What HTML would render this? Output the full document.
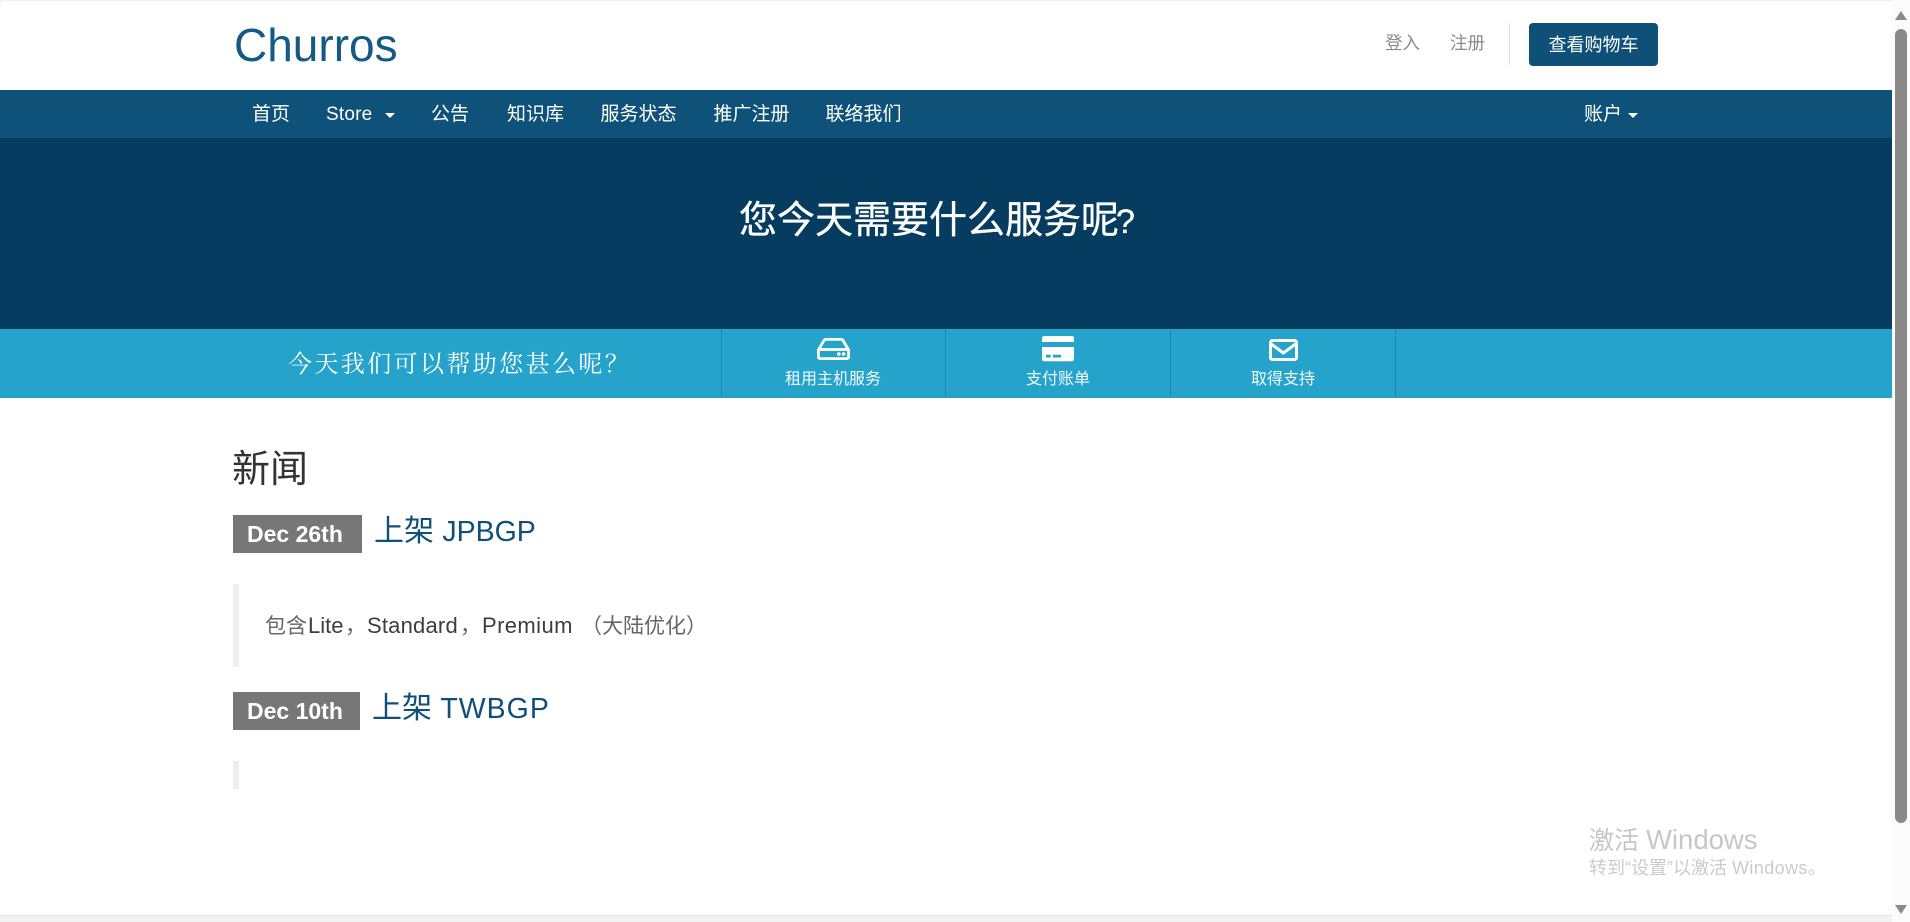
<!DOCTYPE html>
<html lang="zh-CN">
<head>
<meta charset="utf-8">
<title>Churros</title>
<style>
html,body{margin:0;padding:0;width:1910px;height:922px;overflow:hidden;background:#f3f3f3;}
body{position:relative;font-family:"Liberation Sans","Noto Sans CJK SC",sans-serif;}
#page{position:absolute;left:0;top:0;width:1892px;height:915px;background:#fff;border-radius:7px 0 0 0;overflow:hidden;}
#bar{position:absolute;left:1892px;top:0;width:18px;height:922px;background:#fbfbfb;}
.a{position:absolute;white-space:nowrap;}
.t{position:absolute;white-space:nowrap;line-height:1;}
.n{color:#fff;font-size:19px;top:105px;}
.bl{position:absolute;left:233px;width:6px;background:#eee;}
.badge{position:absolute;left:233px;background:#777;color:#fff;font-weight:bold;font-size:23px;line-height:38px;}
.ttl{color:#0f5078;font-size:30px;}
.ttl span{font-size:28.5px;}
.sep{position:absolute;top:329px;width:1px;height:68px;background:#1b87ab;}
.lb{color:#fff;font-size:16px;top:372px;opacity:.95;}
.q{font-size:22px;color:#3d3d3d;top:615px;}
.qc{font-size:21px;color:#666;top:616px;}
.caret{position:absolute;top:113px;width:0;height:0;border-left:5px solid transparent;border-right:5px solid transparent;border-top:5px solid #fff;}
</style>
</head>
<body>
<div id="page">
  <div class="t" style="left:234px;top:22px;font-size:46px;color:#135a84;">Churros</div>

  <div class="t" style="left:1385px;top:35px;font-size:17.5px;color:#8a8a8a;">登入</div>
  <div class="t" style="left:1450px;top:35px;font-size:17.5px;color:#8a8a8a;">注册</div>
  <div class="a" style="left:1509px;top:23px;width:1px;height:42px;background:#e2e2e2;"></div>
  <div class="a" style="left:1529px;top:23px;width:129px;height:43px;background:#0f5078;border-radius:4px;"></div>
  <div class="t" style="left:1548.5px;top:36px;font-size:18px;color:#fff;">查看购物车</div>

  <div class="a" style="left:0;top:90px;width:1892px;height:48px;background:#0f5279;"></div>
  <div class="t n" style="left:252px;">首页</div>
  <div class="t n" style="left:326px;letter-spacing:.2px;">Store</div>
  <div class="caret" style="left:385px;"></div>
  <div class="t n" style="left:431px;">公告</div>
  <div class="t n" style="left:507px;">知识库</div>
  <div class="t n" style="left:600.5px;">服务状态</div>
  <div class="t n" style="left:713.5px;">推广注册</div>
  <div class="t n" style="left:825.5px;">联络我们</div>
  <div class="t n" style="left:1584px;">账户</div>
  <div class="caret" style="left:1628px;"></div>

  <div class="a" style="left:0;top:138px;width:1892px;height:191px;background:#053c60;"></div>
  <div class="t" style="left:739px;top:202px;font-size:38px;color:#fff;-webkit-text-stroke:.35px #fff;">您今天需要什么服务呢<span style="font-size:34px;margin-left:-3px;">?</span></div>

  <div class="a" style="left:0;top:329px;width:1892px;height:69px;background:#25a3cb;"></div>
  <div class="t" style="left:288px;top:353px;font-size:24px;letter-spacing:2.4px;color:#fff;font-family:'Liberation Serif','Noto Serif CJK SC',serif;">今天我们可以帮助您甚么呢？</div>
  <div class="sep" style="left:721px;"></div>
  <div class="sep" style="left:945px;"></div>
  <div class="sep" style="left:1170px;"></div>
  <div class="sep" style="left:1395px;"></div>

  <svg class="a" style="left:817px;top:338px;" width="33" height="22" viewBox="0 0 33 22" fill="none">
    <path d="M1.4 12 L7 2.4 Q7.6 1.4 9 1.4 H24 Q25.4 1.4 26 2.4 L31.6 12 V18.5 Q31.6 20.6 29.5 20.6 H3.5 Q1.4 20.6 1.4 18.5 Z M1.6 11.5 H31.4" stroke="#fff" stroke-width="2.8" stroke-linejoin="round"/>
    <circle cx="21.8" cy="16" r="1.8" fill="#fff"/><circle cx="26.6" cy="16" r="1.8" fill="#fff"/>
  </svg>
  <svg class="a" style="left:1042px;top:336px;" width="32" height="26" viewBox="0 0 32 26">
    <path d="M0 6 V2.5 Q0 0 2.5 0 H29.5 Q32 0 32 2.5 V6 Z" fill="#fff"/>
    <path fill-rule="evenodd" d="M0 11 H32 V22.8 Q32 25.3 29.5 25.3 H2.5 Q0 25.3 0 22.8 Z M4 18.7 V21.5 H8.7 V18.7 Z M11 18.7 V21.5 H19 V18.7 Z" fill="#fff"/>
  </svg>
  <svg class="a" style="left:1269px;top:339px;" width="29" height="22" viewBox="0 0 29 22" fill="none">
    <rect x="1.5" y="1.5" width="26" height="19" rx="2" stroke="#fff" stroke-width="3"/>
    <path d="M1.5 4.5 L14.4 14 L27.3 4.5" stroke="#fff" stroke-width="3"/>
  </svg>

  <div class="t lb" style="left:785px;">租用主机服务</div>
  <div class="t lb" style="left:1026px;">支付账单</div>
  <div class="t lb" style="left:1251px;">取得支持</div>

  <div class="t" style="left:232px;top:451px;font-size:38px;color:#333;">新闻</div>

  <div class="badge" style="top:515px;width:129px;height:38px;"><span style="position:absolute;left:14px;top:0;white-space:nowrap;">Dec 26th</span></div>
  <div class="t ttl" style="left:374px;top:517px;">上架 <span>JPBGP</span></div>
  <div class="bl" style="top:584px;height:83px;"></div>
  <div class="t qc" style="left:265px;">包含</div>
  <div class="t q" style="left:308px;">Lite</div>
  <div class="t qc" style="left:345px;">，</div>
  <div class="t q" style="left:367px;letter-spacing:.2px;">Standard</div>
  <div class="t qc" style="left:460px;">，</div>
  <div class="t q" style="left:482px;letter-spacing:.4px;">Premium</div>
  <div class="t qc" style="left:581px;">（大陆优化）</div>

  <div class="badge" style="top:692px;width:127px;height:38px;"><span style="position:absolute;left:14px;top:0;white-space:nowrap;">Dec 10th</span></div>
  <div class="t ttl" style="left:372px;top:694px;">上架 <span style="letter-spacing:1px;">TWBGP</span></div>
  <div class="bl" style="top:761px;height:28px;"></div>

  <div class="t" style="left:1589px;top:826px;font-size:25px;color:#c6c6c6;">激活 <span style="font-size:27.5px;">Windows</span></div>
  <div class="t" style="left:1589px;top:859px;font-size:18px;color:#cbcbcb;">转到“设置”以激活 <span style="letter-spacing:.4px;">Windows</span>。</div>
</div>

<div class="a" style="left:0;top:0;width:1910px;height:1px;background:#efefef;"></div>
<div class="a" style="left:0;top:915px;width:1892px;height:1px;background:#e4e4e4;"></div>

<div id="bar">
  <svg class="a" style="left:3px;top:11px;" width="12" height="9" viewBox="0 0 12 9"><path d="M6 0 L12 9 H0 Z" fill="#8a8a8a"/></svg>
  <div class="a" style="left:3px;top:29px;width:12px;height:794px;background:#8a8a8a;border-radius:6px;"></div>
  <svg class="a" style="left:3px;top:905px;" width="12" height="9" viewBox="0 0 12 9"><path d="M0 0 H12 L6 9 Z" fill="#8a8a8a"/></svg>
</div>
</body>
</html>
